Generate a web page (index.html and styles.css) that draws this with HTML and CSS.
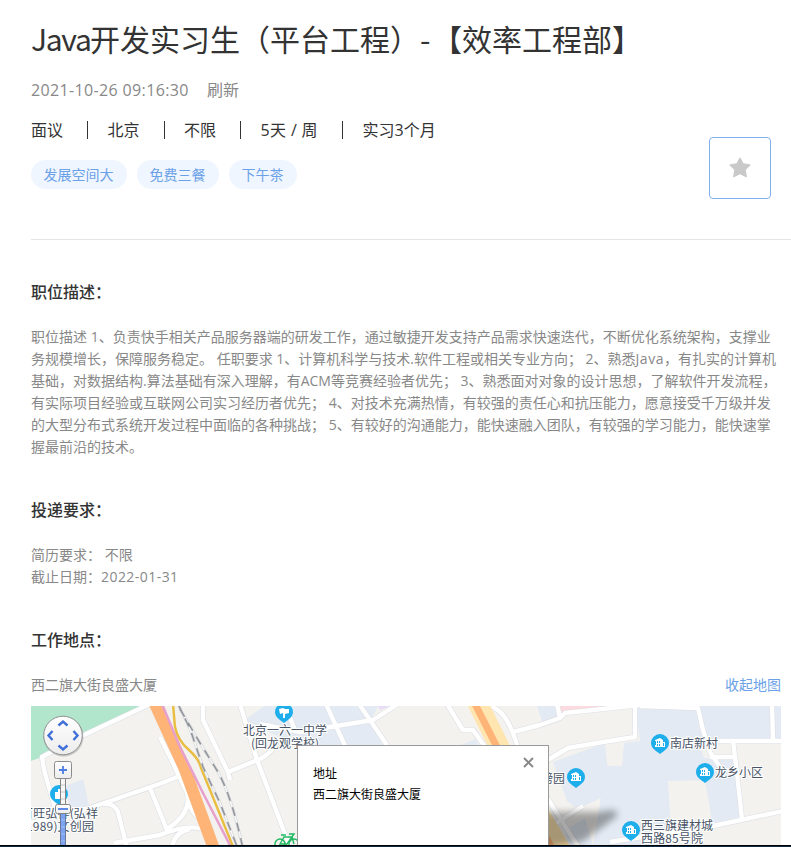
FILE: index.html
```html
<!DOCTYPE html>
<html lang="zh-CN">
<head>
<meta charset="utf-8">
<title>Java开发实习生（平台工程）</title>
<link rel="stylesheet" href="styles.css">
</head>
<body>
<main class="job">
  <header class="job-head">
    <h1><span class="latin">Java</span>开发实习生（平台工程）<span class="dash">-</span>【效率工程部】</h1>
    <p class="refresh"><span class="date">2021-10-26 09:16:30</span><span>刷新</span></p>
    <ul class="facts"><li>面议</li><li>北京</li><li>不限</li><li class="days">5天 / 周</li><li>实习3个月</li></ul>
    <ul class="tags"><li>发展空间大</li><li>免费三餐</li><li>下午茶</li></ul>
    <button class="favorite" aria-label="收藏">
      <svg width="22" height="22" viewBox="0 0 22 22"><path d="M11 .8 14.200 6.700 21.300 7.900 16.300 12.900 17.400 19.900 11 16.700 4.600 19.900 5.700 12.900 .7 7.900 7.800 6.700Z" fill="#c9c9c9" stroke="#c9c9c9" stroke-width="1" stroke-linejoin="round"/></svg>
    </button>
  </header>
  <section class="description">
    <h2>职位描述：</h2>
    <p><span>职位描述 1、负责快手相关产品服务器端的研发工作，通过敏捷开发支持产品需求快速迭代，不断优化系统架构，支撑业</span>
    <span>务规模增长，保障服务稳定。 任职要求 1、计算机科学与技术.软件工程或相关专业方向； 2、熟悉<b class="java">Java</b>，有扎实的计算机</span>
    <span>基础，对数据结构.算法基础有深入理解，有ACM等竞赛经验者优先； 3、熟悉面对对象的设计思想，了解软件开发流程，</span>
    <span>有实际项目经验或互联网公司实习经历者优先； 4、对技术充满热情，有较强的责任心和抗压能力，愿意接受千万级并发</span>
    <span>的大型分布式系统开发过程中面临的各种挑战； 5、有较好的沟通能力，能快速融入团队，有较强的学习能力，能快速掌</span>
    <span>握最前沿的技术。</span></p>
  </section>
  <section class="requirements">
    <h2>投递要求：</h2>
    <p><span>简历要求： 不限</span><span>截止日期：<b class="deadline">2022-01-31</b></span></p>
  </section>
  <section class="location">
    <h2>工作地点：</h2>
    <div class="address"><span>西二旗大街良盛大厦</span><a>收起地图</a></div>
    <div class="map">
      <svg class="map-canvas" width="750" height="139" viewBox="31 706 750 139">
        <defs>
          <linearGradient id="knob" x1="0" y1="0" x2="0" y2="1"><stop offset="0" stop-color="#fff"/><stop offset="1" stop-color="#ececec"/></linearGradient>
          <filter id="soft" x="-20%" y="-40%" width="140%" height="180%"><feGaussianBlur stdDeviation="3.500"/></filter>
          <g id="pin"><path d="M-9 0A9 9 0 1 1 9 0C9 5 4 8 0 11C-4 8-9 5-9 0Z" fill="#1eaeec"/></g>
          <g id="estate"><use href="#pin"/><path d="M-5-3 0-5 3-3V-1H5V4H-5V2H-4V-2H-5ZM-3-2V0H-2V-2ZM-1-2V0H0V-2ZM-3 1V3H-2V1ZM-1 1V3H0V1ZM3 0V3H4V0Z" fill="#fff" fill-rule="evenodd"/></g>
          <g id="roads" fill="none" stroke-linejoin="round">
            <path d="M150 704 84 735 42 757 44 770 57 815M31 823 90 808 162 783 177 777M104 804Q114 803 118 812L127 847M150 788 167 830M114 843 160 835Q190 823 205 830M160 737 170 757 187 793Q192 813 167 829M188 799Q191 816 209 824M172 847Q175 832 190 829"/>
            <path d="M203 704V720L228 772 230 780M228 772 260 759Q274 752 278 738M240 704 257 760 290 847M260 724 300 732 373 720 398 704M326 704 346 748M359 704 389 748M284 704 296 732"/>
            <path d="M447 704 463 730H473L486 748M492 706 499 711Q510 720 518 748M513 732 540 725 560 718 565 713 640 705M557 704 560 718M635 704V737L603 742 568 748 546 761M546 796 579 848M555 824 583 806"/>
            <path d="M640 706 698 708 703 730 710 752 720 767M710 741H783M772 704 773 741M710 757H734M733 741 737 773 742 819M610 842 713 826 783 811"/>
          </g>
        </defs>
        <path d="M31 706H781V845H31Z" fill="#f3f2ef"/>
        <path d="M31 706H149L42 757 31 761Z" fill="#b1e6cd"/>
        <path d="M65 786 83 779 90 810 72 817ZM245 720 264 706H378L372 718 383 747H300L265 730ZM461 745 475 739 480 747ZM537 706H557V718L543 724ZM635 706H781V741H733L742 816 713 827 705 780 668 781 672 845H593L603 785 607 766H622L624 743 640 741ZM553 762 605 743 609 782 603 797 578 809 567 801ZM565 830 585 818 593 845H568Z" fill="#e3eaf3"/>
        <path d="M699 743H732V758H704ZM735 760 781 743V812L742 819Z" fill="#f3f2ef"/>
        <path d="M560 706H620L561 713Z" fill="#fddadd"/><path d="M378 706H390L380 710Z" fill="#e8dcf7"/>
        <use href="#roads" stroke="#dddfe4" stroke-width="5.600"/><use href="#roads" stroke="#fff" stroke-width="4.400"/>
        <path d="M155 704 184 767 214 849" fill="none" stroke="#ffb477" stroke-width="12"/>
        <path d="M162 704 180 747 203 793 232 849" fill="none" stroke="#e7a0cd" stroke-width="2.500"/>
        <path d="M173 704 175 727Q178 741 189 750 199 759 201 768L234 849" fill="none" stroke="#e9bd3f" stroke-width="2.400"/>
        <g fill="none"><path d="M178 704 190 729 203 767 220 803 238 849M180 709 200 743 218 772Q232 797 243 849" stroke="#c9cbcf" stroke-width="2.600"/><path d="M178 704 190 729 203 767 220 803 238 849M180 709 200 743 218 772Q232 797 243 849" stroke="#f8f8f8" stroke-width="1.600"/><path d="M178 704 190 729 203 767 220 803 238 849M180 709 200 743 218 772Q232 797 243 849" stroke="#8f939a" stroke-width="1.500" stroke-dasharray="9 7"/></g>
        <path d="M477 702 500 748 562 852" fill="none" stroke="#ffe5b0" stroke-width="20"/><path d="M474 702 498 749 555 854" fill="none" stroke="#ffb477" stroke-width="7"/>
        <path d="M539 812H600Q622 807 616 817L582 842 539 850Z" fill="#000" opacity=".34" filter="url(#soft)"/>
        <use href="#estate" x="576" y="777"/><use href="#estate" x="660" y="743"/><use href="#estate" x="705" y="772"/><use href="#estate" x="631" y="830"/>
        <use href="#pin" x="284" y="712"/><path d="M279 709 283 708 285 709H289V713L285 714V718H283V713L280 714Z" fill="#fff"/>
        <use href="#pin" x="59" y="794"/><path d="M55 792H58V789H63V799H55Z" fill="#fff"/>
        <g class="map-labels"><text x="243" y="735" textLength="84">北京一六一中学</text><text x="251" y="748" textLength="68">(回龙观学校)</text><text x="670" y="748">南店新村</text><text x="715" y="777">龙乡小区</text><text x="641" y="830">西三旗建材城</text><text x="641" y="843" textLength="62">西路85号院</text><text x="541" y="783">榜园</text><text x="21" y="818" textLength="77">百旺弘祥(弘祥</text><text x="26" y="831" textLength="68">1989)文创园</text></g>
        <g fill="none" stroke="#20b861" stroke-width="1.400"><circle cx="280" cy="844" r="5"/><circle cx="294" cy="844" r="5"/><path d="M280 844 284 837H292L287 844ZM292 837 294 844M281 835H286M289 834H294L292 837"/></g>
        <path d="M60.500 778V846H65.500V778Z" fill="#f6f6f6" stroke="#858585"/><path d="M61 785H65M61 792H65M61 799H65" stroke="#c6c6c6"/>
        <path d="M60.500 812V846H65.500V812Z" fill="#7ba3ef" stroke="#68789c"/><path d="M61 820H65M61 827H65M61 834H65M61 841H65" stroke="#a3bff5"/>
        <circle cx="63.500" cy="736.500" r="20" fill="#777" opacity=".35"/><circle cx="63" cy="735.500" r="19.300" fill="url(#knob)" stroke="#929292"/>
        <path d="m58.500 725.500 4.500-4 4.500 4M58.500 745.500l4.500 4 4.500-4M52.500 731l-4 4.500 4 4.500M73.500 731l4 4.500-4 4.500" fill="none" stroke="#3f6fd8" stroke-width="2.400"/>
        <rect x="54.500" y="761.500" width="17" height="17" rx="2" fill="url(#knob)" stroke="#8c8c8c"/><path d="M59 770H67M63 766V774" stroke="#4d7de2" stroke-width="1.800"/>
        <rect x="55.500" y="804.500" width="15" height="9" rx="2" fill="url(#knob)" stroke="#858585"/><path d="M58 809H68" stroke="#4d7de2" stroke-width="1.800"/>
      </svg>
      <div class="popup">
        <p>地址</p><p>西二旗大街良盛大厦</p>
        <svg class="close" width="11" height="11" viewBox="0 0 11 11"><path d="m1 1 9 9M10 1 1 10" stroke="#888" stroke-width="2"/></svg>
      </div>
    </div>
  </section>
</main>
<footer class="bottom-bar"></footer>
</body>
</html>
```
FILE: styles.css
```css
* { box-sizing: border-box; margin: 0; padding: 0; }
html, body { height: 847px; overflow: hidden; }
body { background: #fff; color: #333; font-family: "Open Sans", "Noto Sans CJK SC", sans-serif; text-spacing-trim: space-all; display: flex; flex-direction: column; }
ul { list-style: none; display: flex; }
b { font-weight: inherit; }
.job { height: 845px; padding-left: 31px; overflow: hidden; }
.job-head { position: relative; height: 240px; padding-top: 20px; border-bottom: 1px solid #e6e6e6; }
h1 { font-size: 30px; font-weight: 400; line-height: 40px; white-space: nowrap; }
.latin, .dash { display: inline-block; font-family: "Noto Sans CJK SC", sans-serif; line-height: 1; }
.latin { width: 59px; letter-spacing: -1.300px; }
.dash { width: 12px; }
.refresh { display: flex; margin-top: 19px; color: #888; font-size: 16px; line-height: 22px; }
.date { width: 176px; letter-spacing: .36px; }
.facts { margin-top: 18px; font-size: 16px; line-height: 22px; white-space: nowrap; }
.facts li { display: flex; align-items: center; }
.facts li + li::before { content: ""; width: 1px; height: 18px; margin: 0 19.500px 0 24px; background: #333; }
.facts .days { letter-spacing: .35px; }
.tags { gap: 10px; margin-top: 19px; }
.tags li { height: 29px; padding: 0 13.500px 0 12.500px; border-radius: 15px; background: #f0f6ff; color: #6aa1e8; font-size: 14px; line-height: 29px; }
.favorite { position: absolute; right: 20px; top: 137px; width: 62px; height: 62px; display: flex; align-items: center; justify-content: center; background: #fff; border: 1px solid #7fb0ee; border-radius: 4px; }
h2 { font-size: 16px; font-weight: 500; line-height: 22px; }
section p { margin-top: 23px; color: #888; font-size: 14px; line-height: 22px; white-space: nowrap; }
section p span { display: block; }
.java { letter-spacing: .5px; }
.deadline { letter-spacing: .45px; }
.description { padding-top: 41px; }
.requirements { padding-top: 41px; }
.location { padding-top: 41px; }
.address { display: flex; justify-content: space-between; width: 750px; margin-top: 23px; color: #888; font-size: 14px; line-height: 22px; }
.address a { color: #6aa1e8; }
.map { position: relative; width: 750px; height: 139px; margin-top: 10px; overflow: hidden; }
.map-canvas { display: block; }
.map-labels { font: 12px "Noto Sans CJK SC", sans-serif; fill: #485366; stroke: #fff; stroke-width: 2px; paint-order: stroke; }
.popup { position: absolute; left: 266px; top: 39px; width: 252px; height: 110px; padding: 17px 15px; background: #fff; border: 1px solid #999; }
.popup p { margin: 0; color: #000; font-size: 12px; line-height: 21px; }
.close { position: absolute; right: 14px; top: 11px; }
.bottom-bar { height: 2px; flex: none; background: #092b45; border-top: 1px solid #000; }
```
